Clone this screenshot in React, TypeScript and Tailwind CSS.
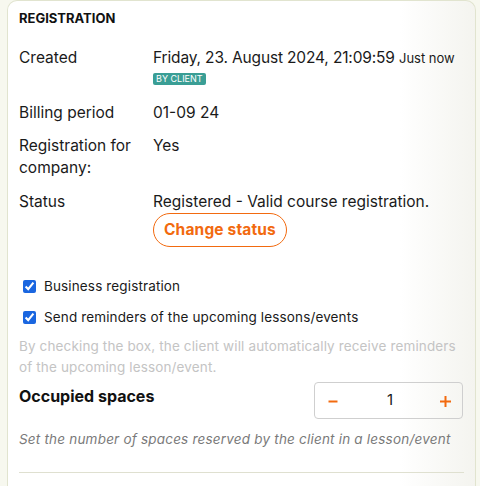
import React from 'react';

const Row = ({ label, children }: { label: React.ReactNode; children: React.ReactNode }) => (
  <div className="grid grid-cols-[134px_1fr] items-start">
    <div className="text-[15.5px] leading-[22px] text-[#1a1a1a]">{label}</div>
    <div className="text-[15.5px] leading-[22px] text-[#1a1a1a]">{children}</div>
  </div>
);

const App = () => {
  return (
    <div
      className="h-[486px] w-[480px] overflow-hidden bg-[#f7f8ef] pl-[7px] pr-[4px]"
      style={{ fontFamily: 'Inter, "Liberation Sans", sans-serif' }}
    >
      <div className="h-[520px] rounded-t-[10px] border border-b-0 border-[#e1e4cf] bg-[linear-gradient(to_right,#ffffff_84%,#f4f4ef_100%)] px-[11px]">
        <h2 className="pt-[8px] text-[13px] font-bold leading-[18px] text-[#111]">
          REGISTRATION
        </h2>

        <div className="mt-[20px] flex flex-col gap-[11px]">
          <Row label="Created">
            <div className="tracking-[-0.01em]">
              Friday, 23. August 2024, 21:09:59{' '}
              <span className="text-[13px] tracking-normal">Just now</span>
            </div>
            <span className="mb-[6px] mt-[4px] block w-fit rounded-[2px] bg-[#3a9e95] px-[3px] text-[9px] leading-[12px] text-white">
              BY CLIENT
            </span>
          </Row>
          <Row label="Billing period">01-09 24</Row>
          <Row label={<>Registration for<br />company:</>}>Yes</Row>
          <Row label={<div className="pt-[1px]">Status</div>}>
            <div className="pt-[1px]">Registered - Valid course registration.</div>
            <button className="block rounded-full border border-[#f26a0f] px-[10px] py-[5px] text-[15.5px] font-bold leading-[22px] tracking-[0.01em] text-[#f26a0f]">
              Change status
            </button>
          </Row>
        </div>

        <div className="mt-[29px] flex flex-col gap-[10px] pl-[4px]">
          <label className="flex items-center gap-[8px] text-[13.5px] leading-[21px] tracking-[0.01em] text-[#1a1a1a]">
            <input type="checkbox" defaultChecked className="m-0 h-[13px] w-[13px] accent-[#1a66e0]" />
            Business registration
          </label>
          <label className="flex items-center gap-[8px] text-[13.5px] leading-[21px] tracking-[0.01em] text-[#1a1a1a]">
            <input type="checkbox" defaultChecked className="m-0 h-[13px] w-[13px] accent-[#1a66e0]" />
            Send reminders of the upcoming lessons/events
          </label>
        </div>

        <p className="mt-[8px] text-[13.5px] leading-[21px] tracking-[0.01em] text-[#c4c4c4]">
          By checking the box, the client will automatically receive reminders
          <br />
          of the upcoming lesson/event.
        </p>

        <div className="mt-[4px] flex items-start justify-between pr-[1px]">
          <h3 className="pt-[4px] text-[16px] font-bold leading-[20px] text-[#111]">Occupied spaces</h3>
          <div className="flex h-[37px] w-[149px] items-center justify-between rounded-[4px] border border-[#cfcfcf] pl-[13px] pr-[11px]">
            <svg width="10" height="11" viewBox="0 0 10 11" className="translate-y-[1px]">
              <path d="M0.5 5.5h9" stroke="#f26a0f" strokeWidth="2" />
            </svg>
            <span className="pl-[2px] text-[15px] text-[#1a1a1a]">1</span>
            <svg width="11" height="11" viewBox="0 0 11 11" className="translate-y-[1px]">
              <path d="M0 5.5h11M5.5 0v11" stroke="#f26a0f" strokeWidth="2" />
            </svg>
          </div>
        </div>

        <p className="mt-[10px] text-[13.5px] italic leading-[20px] tracking-[0.015em] text-[#7a7a7a]">
          Set the number of spaces reserved by the client in a lesson/event
        </p>

        <div className="mt-[23px] border-t border-[#dfe0d0]" />
      </div>
    </div>
  );
};

export default App;
